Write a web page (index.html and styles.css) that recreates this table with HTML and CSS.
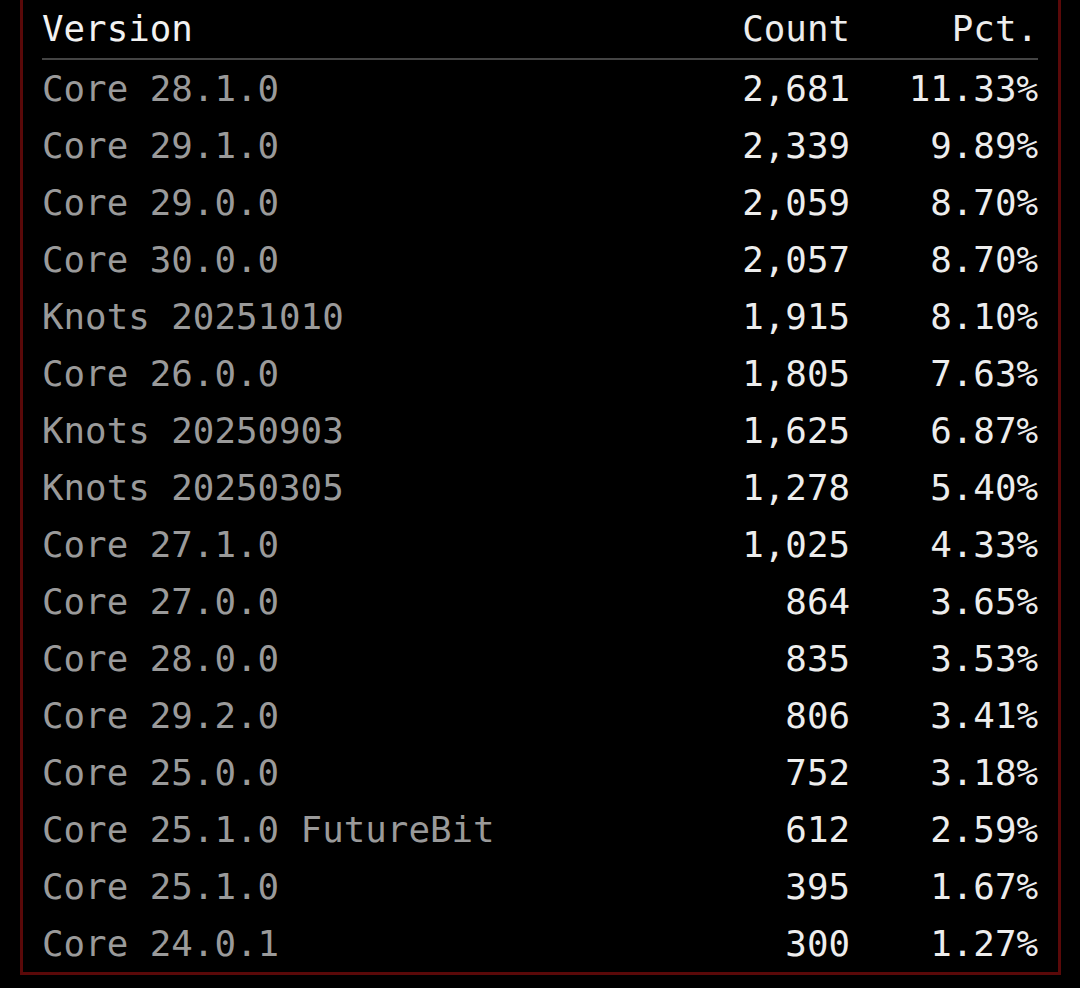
FILE: index.html
```html
<!DOCTYPE html>
<html>
<head>
<meta charset="utf-8">
<link rel="stylesheet" href="styles.css">
</head>
<body>
<div class="panel">
  <div class="table">
    <div class="row head"><span class="ver">Version</span><span class="num">Count</span><span class="num">Pct.</span></div>
    <div class="row"><span class="ver">Core 28.1.0</span><span class="num">2,681</span><span class="num">11.33%</span></div>
    <div class="row"><span class="ver">Core 29.1.0</span><span class="num">2,339</span><span class="num">9.89%</span></div>
    <div class="row"><span class="ver">Core 29.0.0</span><span class="num">2,059</span><span class="num">8.70%</span></div>
    <div class="row"><span class="ver">Core 30.0.0</span><span class="num">2,057</span><span class="num">8.70%</span></div>
    <div class="row"><span class="ver">Knots 20251010</span><span class="num">1,915</span><span class="num">8.10%</span></div>
    <div class="row"><span class="ver">Core 26.0.0</span><span class="num">1,805</span><span class="num">7.63%</span></div>
    <div class="row"><span class="ver">Knots 20250903</span><span class="num">1,625</span><span class="num">6.87%</span></div>
    <div class="row"><span class="ver">Knots 20250305</span><span class="num">1,278</span><span class="num">5.40%</span></div>
    <div class="row"><span class="ver">Core 27.1.0</span><span class="num">1,025</span><span class="num">4.33%</span></div>
    <div class="row"><span class="ver">Core 27.0.0</span><span class="num">864</span><span class="num">3.65%</span></div>
    <div class="row"><span class="ver">Core 28.0.0</span><span class="num">835</span><span class="num">3.53%</span></div>
    <div class="row"><span class="ver">Core 29.2.0</span><span class="num">806</span><span class="num">3.41%</span></div>
    <div class="row"><span class="ver">Core 25.0.0</span><span class="num">752</span><span class="num">3.18%</span></div>
    <div class="row"><span class="ver">Core 25.1.0 FutureBit</span><span class="num">612</span><span class="num">2.59%</span></div>
    <div class="row"><span class="ver">Core 25.1.0</span><span class="num">395</span><span class="num">1.67%</span></div>
    <div class="row"><span class="ver">Core 24.0.1</span><span class="num">300</span><span class="num">1.27%</span></div>
  </div>
</div>
</body>
</html>
```

FILE: styles.css
```css
html, body {
  margin: 0;
  padding: 0;
  background: #000;
}
body {
  font-family: "DejaVu Sans Mono", "Liberation Mono", monospace;
  font-size: 35.8px;
  height: 988px;
  overflow: hidden;
}
.panel {
  margin-left: 20px;
  border: 3px solid #5a0909;
  border-top: none;
  padding: 0 20px 0 19px;
  width: 996px;
}
.table {
  display: flex;
  flex-direction: column;
}
.row {
  display: grid;
  grid-template-columns: 1fr 220px 188px;
  height: 57px;
  align-items: center;
  line-height: 1;
}
.row.head {
  height: 58px;
  border-bottom: 2px solid #444;
  color: #f2f2f2;
}
.row.head .ver {
  color: #f2f2f2;
}
.ver {
  color: #9a9a9a;
  white-space: pre;
}
.num {
  text-align: right;
  color: #ededed;
}
```
